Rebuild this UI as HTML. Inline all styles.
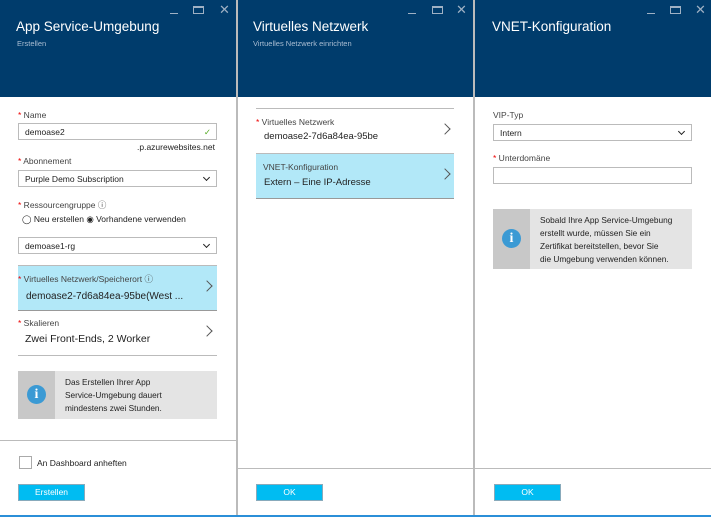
<!DOCTYPE html><html><head><meta charset="utf-8"><style>
*{box-sizing:border-box;margin:0;padding:0}
body{width:711px;height:517px;overflow:hidden;background:#fff;font-family:"Liberation Sans",sans-serif;color:#222;position:relative}
.p{position:absolute;top:0;height:517px;background:#fff}
.hd{position:absolute;left:0;top:0;width:100%;height:97px;background:#003c6c}
.t{position:absolute;left:16px;top:19px;color:#fff;font-size:13.5px}
.st{position:absolute;left:17px;top:39px;color:#a9bdd2;font-size:7.5px}
.mn{position:absolute;top:13px;width:8px;height:1px;background:#9fb1c4}
.mx{position:absolute;top:6px;width:11px;height:8px;border:1px solid #9fb1c4;border-top-width:2px}
.cl{position:absolute;top:2px;color:#9fb1c4;font-size:13px}
.a{position:absolute;font-size:8.5px;color:#444;white-space:nowrap}
.a b{color:#e00;font-weight:normal}
.in{position:absolute;border:1px solid #bbb;height:17px;font-size:8.5px;padding:3px 6px;color:#222;background:#fff}
.sel:after{content:"";position:absolute;right:7px;top:4px;width:4px;height:4px;border-right:1.5px solid #222;border-bottom:1.5px solid #222;transform:rotate(45deg)}
.hl{position:absolute;background:#b2e8f8;border-bottom:1px solid #999}
.chev{position:absolute;width:8px;height:8px;border-right:1px solid #555;border-top:1px solid #555;transform:rotate(45deg)}
.info{position:absolute;background:#e4e4e4;font-size:8.3px;line-height:13px;color:#222}
.info .l{position:absolute;left:0;top:0;bottom:0;width:37px;background:#c8c8c8}
.info .c{position:absolute;left:9px;width:19px;height:19px;border-radius:50%;background:#3b9ad4;color:#fff;font:bold 14px "Liberation Serif",serif;text-align:center;line-height:19px}
.btn{position:absolute;top:484px;width:67px;height:17px;background:#00bcf2;border:1px solid #8ab;color:#fff;font-size:8.5px;text-align:center;line-height:15px}
.ln{position:absolute;height:1px;background:#bbb}
</style></head><body>
<div class="p" style="left:0;width:236px">
<div class="hd"></div><div class="t">App Service-Umgebung</div><div class="st">Erstellen</div>
<div class="mn" style="left:170px"></div><div class="mx" style="left:193px"></div><div class="cl" style="left:219px">✕</div>
<div class="a" style="left:18px;top:110px"><b>*</b> Name</div>
<div class="in" style="left:18px;top:123px;width:199px">demoase2<span style="position:absolute;right:5px;color:#5a2">✓</span></div>
<div class="a" style="left:137px;top:142px;color:#222">.p.azurewebsites.net</div>
<div class="a" style="left:18px;top:156px"><b>*</b> Abonnement</div>
<div class="in sel" style="left:18px;top:170px;width:199px">Purple Demo Subscription</div>
<div class="a" style="left:18px;top:199px"><b>*</b> Ressourcengruppe ⓘ</div>
<div class="a" style="left:22px;top:214px;color:#222">◯ Neu erstellen ◉ Vorhandene verwenden</div>
<div class="in sel" style="left:18px;top:237px;width:199px">demoase1-rg</div>
<div class="ln" style="left:18px;top:265px;width:199px"></div>
<div class="hl" style="left:18px;top:266px;width:199px;height:45px"></div>
<div class="a" style="left:18px;top:273px"><b>*</b> Virtuelles Netzwerk/Speicherort ⓘ</div>
<div class="a" style="left:26px;top:291px;font-size:10px;color:#222">demoase2-7d6a84ea-95be(West ...</div>
<div class="chev" style="left:203px;top:282px"></div>
<div class="a" style="left:18px;top:318px"><b>*</b> Skalieren</div>
<div class="a" style="left:25px;top:333px;font-size:10.5px;color:#222">Zwei Front-Ends, 2 Worker</div>
<div class="chev" style="left:203px;top:327px"></div>
<div class="ln" style="left:18px;top:355px;width:199px"></div>
<div class="info" style="left:18px;top:371px;width:199px;height:48px"><div class="l"></div><div class="c" style="top:14px">i</div><div style="position:absolute;left:47px;top:5px">Das Erstellen Ihrer App<br>Service-Umgebung dauert<br>mindestens zwei Stunden.</div></div>
<div class="ln" style="left:0;top:440px;width:236px"></div>
<div style="position:absolute;left:19px;top:456px;width:13px;height:13px;border:1px solid #aaa"></div>
<div class="a" style="left:37px;top:458px;color:#222">An Dashboard anheften</div>
<div class="btn" style="left:18px">Erstellen</div>
</div>
<div style="position:absolute;left:236px;top:0;width:2px;height:517px;background:#bbb"></div>
<div class="p" style="left:238px;width:235px">
<div class="hd"></div><div class="t" style="left:15px">Virtuelles Netzwerk</div><div class="st" style="left:15px">Virtuelles Netzwerk einrichten</div>
<div class="mn" style="left:170px"></div><div class="mx" style="left:194px"></div><div class="cl" style="left:218px">✕</div>
<div class="ln" style="left:18px;top:108px;width:198px"></div>
<div class="a" style="left:18px;top:117px"><b>*</b> Virtuelles Netzwerk</div>
<div class="a" style="left:26px;top:131px;font-size:9.5px;color:#222">demoase2-7d6a84ea-95be</div>
<div class="chev" style="left:203px;top:125px"></div>
<div class="ln" style="left:18px;top:153px;width:198px"></div>
<div class="hl" style="left:18px;top:154px;width:198px;height:45px"></div>
<div class="a" style="left:25px;top:162px">VNET-Konfiguration</div>
<div class="a" style="left:26px;top:177px;font-size:9.5px;color:#222">Extern – Eine IP-Adresse</div>
<div class="chev" style="left:203px;top:170px"></div>
<div class="ln" style="left:0;top:468px;width:235px"></div>
<div class="btn" style="left:18px">OK</div>
</div>
<div style="position:absolute;left:473px;top:0;width:2px;height:517px;background:#bbb"></div>
<div class="p" style="left:475px;width:236px">
<div class="hd"></div><div class="t" style="left:17px">VNET-Konfiguration</div>
<div class="mn" style="left:172px"></div><div class="mx" style="left:195px"></div><div class="cl" style="left:220px">✕</div>
<div class="a" style="left:18px;top:110px">VIP-Typ</div>
<div class="in sel" style="left:18px;top:124px;width:199px">Intern</div>
<div class="a" style="left:18px;top:153px"><b>*</b> Unterdomäne</div>
<div class="in" style="left:18px;top:167px;width:199px"></div>
<div class="info" style="left:18px;top:209px;width:199px;height:60px"><div class="l"></div><div class="c" style="top:20px">i</div><div style="position:absolute;left:47px;top:5px">Sobald Ihre App Service-Umgebung<br>erstellt wurde, müssen Sie ein<br>Zertifikat bereitstellen, bevor Sie<br>die Umgebung verwenden können.</div></div>
<div class="ln" style="left:0;top:468px;width:236px"></div>
<div class="btn" style="left:19px">OK</div>
</div>
<div style="position:absolute;left:0;top:515px;width:711px;height:2px;background:#2b8fd8"></div>
</body></html>
